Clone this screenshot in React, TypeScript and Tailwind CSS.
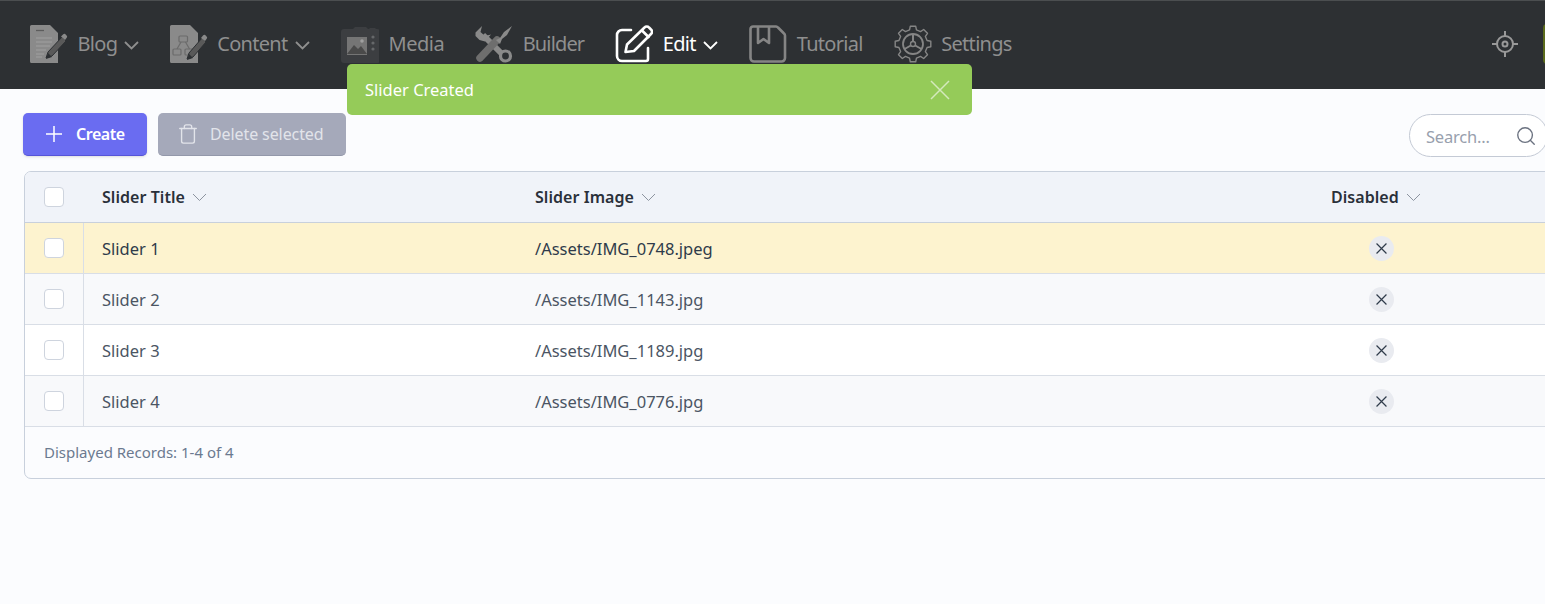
import { Search, Trash } from 'lucide-react'
import type { ReactNode } from 'react'

const sliders = [
  { title: 'Slider 1', image: '/Assets/IMG_0748.jpeg', bg: 'bg-[#fdf3cf] text-[#2f3b4a]' },
  { title: 'Slider 2', image: '/Assets/IMG_1143.jpg', bg: 'bg-[#f8f9fb] text-[#4b5563]' },
  { title: 'Slider 3', image: '/Assets/IMG_1189.jpg', bg: 'bg-white text-[#4b5563]' },
  { title: 'Slider 4', image: '/Assets/IMG_0776.jpg', bg: 'bg-[#f8f9fb] text-[#4b5563]' },
]

// 8 tooth gear outline for the settings icon
const gearPath = Array.from({ length: 8 }, (_, i) => {
  const a = (i * Math.PI) / 4 - Math.PI / 2
  const pt = (r: number, d: number) => `${(19 + r * Math.cos(a + d)).toFixed(2)} ${(19 + r * Math.sin(a + d)).toFixed(2)}`
  return `${i === 0 ? 'M' : 'L'}${pt(14.5, -0.24)}L${pt(18, -0.15)}L${pt(18, 0.15)}L${pt(14.5, 0.24)}`
}).join('') + 'Z'

function BlogIcon() {
  return (
    <svg width="38" height="38" viewBox="0 0 38 38">
      <path d="M0 1.500A1.500 1.500 0 0 1 1.500 0H20L28 8v30H1.500A1.500 1.500 0 0 1 0 36.500z" fill="#8a8a8a" />
      <path d="M6 5.500h8" stroke="#5c5c5c" strokeWidth="1.300" />
      <path d="M6 13h16M6 17h16M6 21h14M6 25h10M6 29h8M6 32h6" stroke="#a0a0a0" strokeWidth="1" />
      <path d="M16 33l2-6 14-15 4 4-14 15z" fill="#595959" stroke="#2d3033" strokeWidth="1" />
      <path d="M31 11.500l2-2a2 2 0 0 1 3 .500 2 2 0 0 1 .500 3L35 15z" fill="#8a8a8a" />
      <path d="M16 34l2-6 4 4z" fill="#2d3033" />
    </svg>
  )
}

function ContentIcon() {
  return (
    <svg width="38" height="38" viewBox="0 0 38 38">
      <path d="M0 1.500A1.500 1.500 0 0 1 1.500 0H20L28 8v30H1.500A1.500 1.500 0 0 1 0 36.500z" fill="#8a8a8a" />
      <rect x="9" y="11" width="8.500" height="6" rx="1" fill="none" stroke="#6b6b6b" strokeWidth="1.200" />
      <rect x="3" y="24" width="8" height="6" rx="1" fill="none" stroke="#6b6b6b" strokeWidth="1.200" />
      <rect x="15" y="24" width="8" height="6" rx="1" fill="none" stroke="#6b6b6b" strokeWidth="1.200" />
      <path d="M11 17l-4 7M15.500 17l4 7" stroke="#6b6b6b" strokeWidth="1.200" />
      <path d="M17 34l2-6 13-15 4 4-13 15z" fill="#595959" stroke="#2d3033" strokeWidth="1" />
      <path d="M31 13l2-2.500a2 2 0 0 1 3 .500 2 2 0 0 1 .500 3L35 16z" fill="#8a8a8a" />
      <path d="M17 35l2-6 4 4z" fill="#2d3033" />
    </svg>
  )
}

function MediaIcon() {
  return (
    <svg width="38" height="38" viewBox="0 0 38 38">
      <path d="M12 4l2-2h11l2 2h1l1-1h5l1 1h1a3 3 0 0 1 3 3v28a3 3 0 0 1-3 3H3a3 3 0 0 1-3-3V7a3 3 0 0 1 3-3z" fill="#3c3e41" />
      <rect x="6" y="12" width="20" height="18" fill="#757575" />
      <path d="M6 29l7-9 4 4 3-3 6 8z" fill="#4a4a4a" />
      <circle cx="21" cy="16" r="1.800" fill="#a0a0a0" />
      <circle cx="32" cy="12" r="1.600" fill="#66686a" />
      <circle cx="32" cy="18" r="1.600" fill="#66686a" />
      <circle cx="32" cy="24" r="1.600" fill="#66686a" />
    </svg>
  )
}

function BuilderIcon() {
  return (
    <svg width="38" height="38" viewBox="0 0 38 38">
      <path d="M8 10L29 31" stroke="#8a8a8a" strokeWidth="6" />
      <path d="M0.500 7.500L7 1l-1.500 6 4.500 4 6-1.500-6 7-5.500-1.500-4-4z" fill="#8a8a8a" />
      <circle cx="30.500" cy="31" r="5" fill="#2d3033" stroke="#8a8a8a" strokeWidth="3.200" />
      <path d="M5 33L22 15" stroke="#6e6e6e" strokeWidth="7.500" strokeLinecap="round" />
      <path d="M21 15l4-2 4-6 8-6-5 9-5 4-2 5z" fill="#8a8a8a" />
    </svg>
  )
}

function EditIcon() {
  return (
    <svg width="38" height="38" viewBox="0 0 38 38" fill="none" stroke="#fff" strokeWidth="2.600" strokeLinecap="round" strokeLinejoin="round">
      <path d="M16 5H7a5 5 0 0 0-5 5v21a5 5 0 0 0 5 5h24a2 2 0 0 0 2-2V23" />
      <path d="M10.500 27l1.500-7.500L29.500 2.500a3 3 0 0 1 4.500 0l2 2a3 3 0 0 1 0 4.500L19 26z" />
      <path d="M27 5.500l6.500 6.500" />
    </svg>
  )
}

function TutorialIcon() {
  return (
    <svg width="38" height="38" viewBox="0 0 38 38" fill="none" stroke="#858585" strokeWidth="2.600" strokeLinejoin="round">
      <path d="M4 1.500h23a3 3 0 0 1 2 1l6 6a3 3 0 0 1 1 2V33a3.500 3.500 0 0 1-3.500 3.500H5A3.500 3.500 0 0 1 1.500 33V4A2.500 2.500 0 0 1 4 1.500z" />
      <path d="M9 2v16l5.500-4 5.500 4V2" />
    </svg>
  )
}

function SettingsIcon() {
  return (
    <svg width="38" height="38" viewBox="0 0 38 38" fill="none" stroke="#858585" strokeWidth="1.400" strokeLinejoin="round">
      <path d={gearPath} />
      <circle cx="19" cy="19" r="10" strokeWidth="1.800" />
      <circle cx="19" cy="19" r="2.500" />
      <path d="M19 9v7.500M10.500 24l6.300-3.500M27.500 24l-6.300-3.500" strokeWidth="2" />
    </svg>
  )
}

function TargetIcon() {
  return (
    <svg width="26" height="26" viewBox="0 0 26 26" fill="none" stroke="#999" strokeWidth="2">
      <circle cx="13" cy="13" r="8" />
      <circle cx="13" cy="13" r="2.500" />
      <path d="M13 0v5M13 21v5M0 13h5M21 13h5" />
    </svg>
  )
}

function Caret({ className, strokeWidth }: { className: string; strokeWidth: number }) {
  return (
    <svg width="15" height="9" viewBox="0 0 15 9" fill="none" stroke="currentColor" strokeWidth={strokeWidth} className={className}>
      <path d="M1 1l6.500 6.500L14 1" />
    </svg>
  )
}

function CloseX({ size, className, strokeWidth }: { size: number; className?: string; strokeWidth: number }) {
  return (
    <svg width={size} height={size} viewBox="0 0 20 20" fill="none" stroke="currentColor" strokeWidth={strokeWidth} className={className}>
      <path d="M1 1l18 18M19 1L1 19" />
    </svg>
  )
}

function NavItem({ icon, label, caret, active, labelClass = 'tracking-[-0.7px]', caretClass = 'ml-[7.500px]' }: { icon: ReactNode; label: string; caret?: boolean; active?: boolean; labelClass?: string; caretClass?: string }) {
  return (
    <div className={`flex items-center ${active ? 'text-white' : 'text-[#8f8f8f]'}`}>
      <span className="flex w-[38px] shrink-0">{icon}</span>
      <span className={`ml-[9.500px] text-[20px] ${labelClass}`}>{label}</span>
      {caret && <Caret strokeWidth={1.8} className={`mt-[3px] ${caretClass}`} />}
    </div>
  )
}

function Checkbox() {
  return <span className="block h-5 w-5 rounded-[4px] border border-[#ced4de] bg-white" />
}

function SortHead({ label }: { label: string }) {
  return (
    <span className="flex items-center gap-[7px] text-[16px] font-semibold tracking-[0.05px] text-[#2a303a]">
      {label}
      <Caret strokeWidth={1} className="mt-[1px] text-[#8d94a0]" />
    </span>
  )
}

export default function App() {
  return (
    <div className="relative h-[604px] w-[1545px] overflow-hidden bg-[#fbfcfe] font-['Noto_Sans',sans-serif]">
      <header className="flex h-[89px] items-center gap-[31px] border-t border-[#4b4e50] bg-[#2d3033] pb-[2px] pl-[30px]">
        <NavItem icon={<BlogIcon />} label="Blog" caret caretClass="ml-[6.500px]" />
        <NavItem icon={<ContentIcon />} label="Content" caret />
        <NavItem icon={<MediaIcon />} label="Media" labelClass="tracking-[-0.5px]" />
        <NavItem icon={<BuilderIcon />} label="Builder" labelClass="tracking-[-0.85px]" />
        <NavItem icon={<EditIcon />} label="Edit" caret active />
        <NavItem icon={<TutorialIcon />} label="Tutorial" />
        <NavItem icon={<SettingsIcon />} label="Settings" />
        <div className="ml-auto mr-[-2px] flex items-center gap-[25px]">
          <TargetIcon />
          <span className="h-[40px] w-[4px] rounded-l-[4px] bg-[#5b6b1c]" />
        </div>
      </header>

      {/* toast sits over the header and the toolbar */}
      <div className="absolute left-[347px] top-[64px] flex h-[51px] w-[625px] items-center justify-between rounded-[5px] bg-[#95cb59] pl-[18px] pr-[22px] text-[16.5px] text-white">
        <span className="pt-[1px]">Slider Created</span>
        <CloseX size={20} strokeWidth={1.5} className="text-[#d4e9bc]" />
      </div>

      <main className="w-[1570px] pl-[23px] pt-[24px]">
        <div className="flex items-start">
          <button className="flex h-[43px] w-[124px] items-center gap-[14px] rounded-[5px] border-b border-[#5654d8] bg-[#6a6cf1] pl-[23px] text-[16px] font-semibold tracking-[-0.45px] text-white shadow-sm">
            <svg width="16" height="16" viewBox="0 0 16 16" fill="none" stroke="currentColor" strokeWidth="1.500">
              <path d="M8 0v16M0 8h16" />
            </svg>
            Create
          </button>
          <button className="ml-[11px] flex h-[43px] w-[188px] items-center gap-[11px] rounded-[5px] border-b border-[#9398aa] bg-[#a5a9ba] pl-[19px] text-[16px] tracking-[-0.1px] text-[#e2e4ea]">
            <Trash size={22} strokeWidth={1.5} />
            Delete selected
          </button>
          <div className="ml-[1063px] mt-[1px] flex h-[43px] w-[139px] items-center rounded-full border border-[#c4cad5] bg-white pl-[16px] text-[16.5px] tracking-[-0.2px] text-[#98a0ad]">
            <span className="pt-[4px]">Search...</span>
            <Search size={22} strokeWidth={1.5} className="ml-[25px] text-[#6b7280]" />
          </div>
        </div>

        <div className="ml-[1px] mt-[14px] w-[1546px] overflow-hidden rounded-[7px] border border-[#c8d0dc]">
          <div className="flex h-[51px] items-center border-b border-[#c8d0dc] bg-[#f0f3f9]">
            <div className="flex w-[59px] justify-center pr-[1px]">
              <Checkbox />
            </div>
            <div className="w-[433px] pl-[18px]">
              <SortHead label="Slider Title" />
            </div>
            <div className="w-[814px] pl-[18px]">
              <SortHead label="Slider Image" />
            </div>
            <SortHead label="Disabled" />
          </div>
          {sliders.map((s) => (
            <div key={s.title} className={`flex h-[51px] items-stretch border-b border-[#d9dee6] text-[16.5px] last:border-[#c8d0dc] ${s.bg}`}>
              <div className="flex w-[59px] items-center justify-center border-r border-[#d9dee6] pr-[1px]">
                <Checkbox />
              </div>
              <div className="flex w-[433px] items-center pl-[18px] pt-[3px]">{s.title}</div>
              <div className="flex w-[814px] items-center pl-[18px] pt-[3px]">{s.image}</div>
              <div className="flex w-[100px] items-center justify-center">
                <span className="flex h-[25px] w-[25px] items-center justify-center rounded-full bg-[#e9ebf0] text-[#2f3b4a]">
                  <CloseX size={11} strokeWidth={2.2} />
                </span>
              </div>
            </div>
          ))}
          <div className="flex h-[51px] items-center pl-[19px] text-[15px] text-[#6b7a90]">Displayed Records: 1-4 of 4</div>
        </div>
      </main>
    </div>
  )
}
